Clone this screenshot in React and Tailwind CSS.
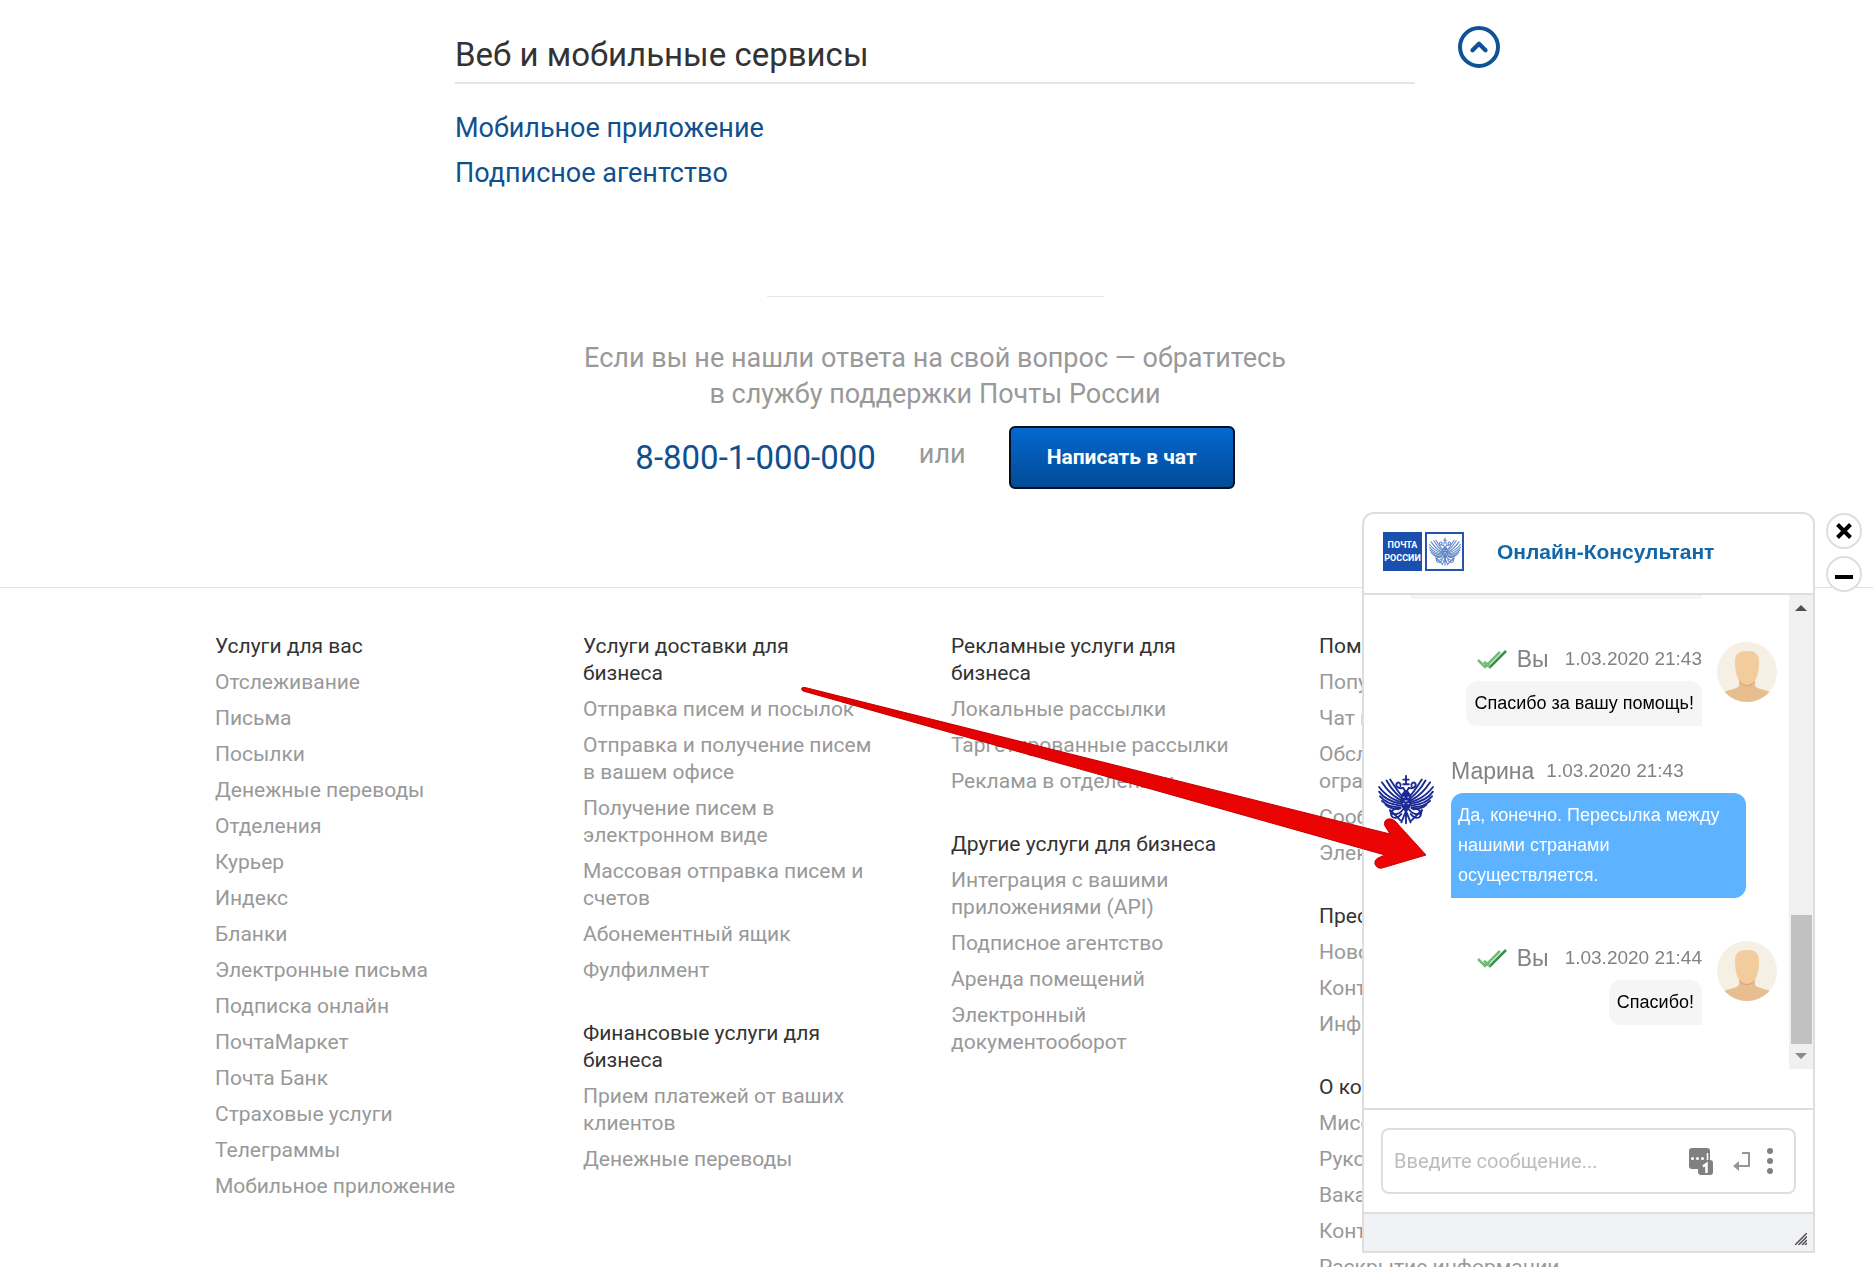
import React from 'react';
import { ChevronUp } from 'lucide-react';

const FOOTER_COLUMNS = [
  [
    {
      title: 'Услуги для вас',
      links: [
        'Отслеживание',
        'Письма',
        'Посылки',
        'Денежные переводы',
        'Отделения',
        'Курьер',
        'Индекс',
        'Бланки',
        'Электронные письма',
        'Подписка онлайн',
        'ПочтаМаркет',
        'Почта Банк',
        'Страховые услуги',
        'Телеграммы',
        'Мобильное приложение'
      ]
    }
  ],
  [
    {
      title: 'Услуги доставки для бизнеса',
      links: [
        'Отправка писем и посылок',
        'Отправка и получение писем в\u00a0вашем офисе',
        'Получение писем в электронном виде',
        'Массовая отправка писем и счетов',
        'Абонементный ящик',
        'Фулфилмент'
      ]
    },
    {
      title: 'Финансовые услуги для бизнеса',
      links: ['Прием платежей от ваших клиентов', 'Денежные переводы']
    }
  ],
  [
    {
      title: 'Рекламные услуги для бизнеса',
      links: ['Локальные рассылки', 'Таргетированные рассылки', 'Реклама в отделениях']
    },
    {
      title: 'Другие услуги для бизнеса',
      links: [
        'Интеграция с вашими приложениями (API)',
        'Подписное агентство',
        'Аренда помещений',
        'Электронный документооборот'
      ]
    }
  ],
  [
    {
      title: 'Помощь',
      links: [
        'Популярные вопросы',
        'Чат поддержки',
        'Обслуживание лиц с ограничениями',
        'Сообщить о проблеме',
        'Электронные услуги'
      ]
    },
    {
      title: 'Пресс-центр',
      links: ['Новости', 'Контакты для СМИ', 'Информация']
    },
    {
      title: 'О компании',
      links: ['Миссия', 'Руководство', 'Вакансии', 'Контакты', 'Раскрытие информации']
    }
  ]
];

// One wing, the other one is mirrored
const Wing = () => (
  <g>
    <path d="M25 26 C20 22 14 16 9 7" />
    <path d="M24 28 C16 24 10 18 4 9" />
    <path d="M24 30 C14 27 7 22 1 14" />
    <path d="M24 32 C14 30 6 26 1 19" />
    <path d="M24 34 C15 33 7 30 2 24" />
    <path d="M24 36 C16 36 9 34 4 29" />
    <path d="M24 37 C18 38 12 37 8 33" />
    <path d="M26 24 C22 20 18 14 13 6" />
    <path d="M27 15 C23 16 18 14 20 10 C22 8 25 10 24 13" />
    <path d="M27 38 C21 46 13 44 13 39" />
    <path d="M22 38 C16 36 12 42 15 46 C18 49 23 46 25 43" />
    <path d="M13 39 L24 50" />
  </g>
);

const Eagle = ({ className }) => (
  <svg viewBox="0 0 60 56" className={className} fill="none" stroke="currentColor" strokeWidth="2" strokeLinecap="round" aria-hidden="true">
    <Wing />
    <g transform="translate(60 0) scale(-1 1)">
      <Wing />
    </g>
    <path d="M30 2v9M27 6h6M27 11h6" strokeWidth="2" />
    <path d="M30 17 C24 20 23 28 25 35 L30 42 L35 35 C37 28 36 20 30 17z" fill="currentColor" stroke="none" />
    <path d="M27 15 C28 17 30 19 30 22 M33 15 C32 17 30 19 30 22" />
    <path d="M30 40 L25 52 M30 40 L35 52 M30 40v13" strokeWidth="2" />
    <path d="M27 25h1M32 25h1M29 29h2M27 32h1M32 32h1" stroke="#fff" strokeWidth="1" />
  </svg>
);

const UserAvatar = () => (
  <svg viewBox="0 0 60 60" className="size-[60px] shrink-0" aria-hidden="true">
    <clipPath id="avatar-clip">
      <circle cx="30" cy="30" r="30" />
    </clipPath>
    <g clipPath="url(#avatar-clip)">
      <rect width="60" height="60" fill="#f5efe4" />
      <path d="M5 52 C8 47 22 48 22 43 V37 H38 V43 C38 48 52 47 55 52 V60 H5z" fill="#e8bd90" />
      <path d="M22 39 C26 46 34 46 38 39 V36 H22z" fill="#dba878" />
      <path d="M18 19 C18 12 22 9 30 9 C38 9 42 12 42 19 C42 33 39 42 30 43 C21 42 18 33 18 19z" fill="#f3cc9e" />
    </g>
  </svg>
);

const DoubleCheck = () => (
  <svg viewBox="0 0 30 20" className="h-5 w-[30px]" fill="none" strokeWidth="2.500" aria-label="Прочитано">
    <path d="M1 10 L8 17 L23 2" stroke="#6fbf73" />
    <path d="M7 12 L13 17 L29 1" stroke="#35914a" />
    <path d="M7 12 L13 17" stroke="#7cc680" strokeWidth="2" />
  </svg>
);

const OwnMessage = ({ time, text }) => (
  <div className="flex items-start justify-end gap-[15px] pr-3">
    <div className="flex flex-col items-end">
      <div className="flex h-[39px] items-center gap-4 pb-1 text-[19px] text-[#828282]">
        <span className="flex items-center gap-[10px] text-[23px]">
          <DoubleCheck />
          Вы
        </span>
        <time>{time}</time>
      </div>
      <p className="rounded-[12px] rounded-br-none bg-[#f5f5f6] px-2 pt-[7px] pb-2 text-[18px] leading-[30px] text-black">{text}</p>
    </div>
    <UserAvatar />
  </div>
);

const OperatorMessage = ({ name, time, text }) => (
  <div className="flex items-start gap-[15px] pl-3">
    <Eagle className="mt-5 h-[52px] w-[60px] shrink-0 text-[#1b2a94]" />
    <div className="flex flex-col items-start">
      <div className="flex h-[39px] items-center gap-3 pb-1 text-[19px] text-[#828282]">
        <span className="text-[23px]">{name}</span>
        <time>{time}</time>
      </div>
      <p className="w-[295px] rounded-[12px] rounded-bl-none bg-[#5db3ff] px-[7px] pt-[7px] pb-2 text-[18px] leading-[30px] text-white">{text}</p>
    </div>
  </div>
);

const ChatLogo = () => (
  <div className="flex gap-[3px]">
    <div className="flex size-[39px] flex-col items-center justify-center bg-[#1a4fae] font-['Roboto'] text-[9px] leading-[13px] font-bold text-white">
      <span>ПОЧТА</span>
      <span>РОССИИ</span>
    </div>
    <div className="flex size-[39px] items-center justify-center border-2 border-[#2455a8] bg-white">
      <Eagle className="size-8 text-[#5f86c6]" />
    </div>
  </div>
);

const ScrollTrack = () => (
  <div className="flex h-[474px] w-6 shrink-0 flex-col items-center bg-[#f0f0f0]">
    <svg viewBox="0 0 12 6" className="mt-[10px] h-[6px] w-3" aria-hidden="true">
      <path d="M0 6 L6 0 L12 6z" fill="#505050" />
    </svg>
    <div className="mt-auto h-[129px] w-[21px] bg-[#c1c1c1]" />
    <svg viewBox="0 0 12 6" className="mt-[9px] mb-[10px] h-[6px] w-3" aria-hidden="true">
      <path d="M0 0 L6 6 L12 0z" fill="#8b8b8b" />
    </svg>
  </div>
);

const ChatInput = () => (
  <div className="flex h-[66px] items-center rounded-lg border-2 border-[#dedede] bg-white pr-[21px] pl-[11px] text-[#828282]">
    <input
      type="text"
      aria-label="Введите сообщение"
      placeholder="Введите сообщение..."
      className="min-w-0 flex-1 font-['Roboto'] text-xl text-[#333] outline-none placeholder:text-[#bdbdbd]"
    />
    <button type="button" aria-label="Быстрые ответы">
      <svg viewBox="0 0 24 27" className="h-[27px] w-6">
        <rect width="21" height="21" rx="3" fill="#808080" />
        <rect x="9" y="12" width="15" height="15" rx="3" fill="#808080" />
        <path d="M3.500 10.500h.01M8.500 10.500h.01M13.500 10.500h.01" stroke="#fff" strokeWidth="3" strokeLinecap="round" />
        <path d="M18.500 5v7" stroke="#fff" strokeWidth="1.500" />
        <path d="M14 18.500 L17.500 16 V25" stroke="#fff" strokeWidth="2.500" fill="none" />
      </svg>
    </button>
    <button type="button" aria-label="Отправить" className="ml-5">
      <svg viewBox="0 0 17 19" className="h-[19px] w-[17px]" fill="none" stroke="#969696" strokeWidth="2">
        <path d="M9 1 H16 V14 H3" />
        <path d="M0 14 L6 9 V19z" fill="#969696" stroke="none" />
      </svg>
    </button>
    <button type="button" aria-label="Меню" className="ml-[17px]">
      <svg viewBox="0 0 6 26" className="h-[26px] w-[6px]" fill="#808080">
        <circle cx="3" cy="3" r="3" />
        <circle cx="3" cy="13" r="3" />
        <circle cx="3" cy="23" r="3" />
      </svg>
    </button>
  </div>
);

const ChatWidget = () => (
  <aside className="fixed right-[11px] bottom-[14px] flex items-start gap-[11px] font-['Liberation_Sans',sans-serif]">
    <div className="flex h-[741px] w-[453px] flex-col overflow-hidden rounded-t-xl border-2 border-[#dedede] bg-white">
      <header className="flex h-[81px] shrink-0 items-center gap-[33px] border-b-2 border-[#dedede] pb-1 pl-[19px]">
        <ChatLogo />
        <h2 className="text-[21px] font-bold text-[#1167a8]">Онлайн-Консультант</h2>
      </header>
      <div className="flex min-h-0 flex-1">
        <div className="flex-1">
          <div className="ml-[46px] h-1 w-[292px] rounded-bl bg-[#f5f5f6]" />
          <div className="mt-[43px]">
            <OwnMessage time="1.03.2020 21:43" text="Спасибо за вашу помощь!" />
          </div>
          <div className="mt-7">
            <OperatorMessage name="Марина" time="1.03.2020 21:43" text="Да, конечно. Пересылка между нашими странами осуществляется." />
          </div>
          <div className="mt-[43px]">
            <OwnMessage time="1.03.2020 21:44" text="Спасибо!" />
          </div>
        </div>
        <ScrollTrack />
      </div>
      <div className="border-t-2 border-[#dedede] px-[17px] py-[18px]">
        <ChatInput />
      </div>
      <div className="flex h-[39px] shrink-0 items-end justify-end border-t-2 border-[#dedede] bg-[#f1f2f5] p-[6px]">
        <svg viewBox="0 0 12 12" className="size-3" stroke="#505050" strokeWidth="1.500" aria-hidden="true">
          <path d="M0 12 L12 0 M3.500 12 L12 3.500 M7 12 L12 7 M10 12 L12 10" />
        </svg>
      </div>
    </div>
    <div className="flex flex-col gap-[7px] pt-px">
      <button type="button" aria-label="Закрыть" className="flex size-9 items-center justify-center rounded-full border-2 border-[#dedede] bg-white">
        <svg viewBox="0 0 16 16" className="size-4" stroke="#000" strokeWidth="4">
          <path d="M1.500 1.500 L14.500 14.500 M14.500 1.500 L1.500 14.500" />
        </svg>
      </button>
      <button type="button" aria-label="Свернуть" className="flex size-9 items-center justify-center rounded-full border-2 border-[#dedede] bg-white pt-[6px]">
        <svg viewBox="0 0 18 4" className="h-1 w-[18px]">
          <rect width="18" height="4" />
        </svg>
      </button>
    </div>
  </aside>
);

// Hand-drawn pointer to the operator's reply
const PointerArrow = () => (
  <svg viewBox="0 0 626 186" className="pointer-events-none fixed right-[446px] bottom-[394px] h-[186px] w-[626px]" aria-hidden="true">
    <defs>
      <linearGradient id="arrow-fill" x1="0" y1="0" x2="0" y2="1">
        <stop offset="0" stopColor="#e00000" />
        <stop offset="1" stopColor="#ee0505" />
      </linearGradient>
    </defs>
    <path
      d="M2 0 L589 147 L584 139 Q582 134 587 132 Q590 131 594 134 L625 168 L581 181 Q576 182 574 177 Q573 173 577 171 L584 168 L2 4 Q-1 2 2 0z"
      fill="url(#arrow-fill)"
      stroke="#c40000"
      strokeWidth="1"
    />
  </svg>
);

const FooterGroup = ({ title, links }) => (
  <section>
    <h3 className="text-[#333]">{title}</h3>
    <ul className="mt-[9px] flex flex-col gap-[9px]">
      {links.map((link) => (
        <li key={link}>
          <a href="#">{link}</a>
        </li>
      ))}
    </ul>
  </section>
);

const App = () => {
  return (
    <div className="h-screen overflow-hidden bg-white font-['Roboto',sans-serif]">
      <main className="pr-[3px] text-[27px] text-[#999]">
        <section className="relative mx-auto max-w-[960px] pt-8">
          <h1 className="border-b-2 border-[#e6e6e6] pb-[5px] text-[33px] leading-[45px] text-[#333]">Веб и мобильные сервисы</h1>
          <button
            type="button"
            aria-label="Свернуть раздел"
            className="absolute top-[26px] left-full ml-[43px] flex size-[42px] items-center justify-center rounded-full border-4 border-[#0f5298] text-[#0f5298]"
          >
            <ChevronUp size={26} strokeWidth={4} />
          </button>
          <ul className="mt-[22px] text-[#10508f]">
            <li className="leading-[45px]">
              <a href="#">Мобильное приложение</a>
            </li>
            <li className="leading-[45px]">
              <a href="#">Подписное агентство</a>
            </li>
          </ul>
        </section>

        <hr className="mx-auto mt-[100px] w-[337px] border-[#e6e6e6]" />

        <section className="mt-[43px] text-center">
          <p className="leading-9">
            Если вы не нашли ответа на свой вопрос — обратитесь
            <br />
            в службу поддержки Почты России
          </p>
          <div className="mt-[14px] flex items-center justify-center gap-[43px]">
            <a href="#" className="text-[33px] text-[#10508f]">8-800-1-000-000</a>
            <span className="pb-[6px]">или</span>
            <button
              type="button"
              className="h-[63px] rounded-md border-2 border-[#04101f] bg-linear-to-b from-[#0468cf] to-[#024b97] px-9 text-[21px] font-bold text-white"
            >
              Написать в чат
            </button>
          </div>
        </section>
      </main>

      <footer className="mt-[98px] border-t border-[#e2e2e2] pt-[45px] text-[21px] leading-[27px] text-[#999]">
        <div className="mx-auto grid max-w-[1443px] grid-cols-4 gap-x-[29px]">
          {FOOTER_COLUMNS.map((groups) => (
            <div key={groups[0].title} className="flex flex-col gap-9 pr-[50px]">
              {groups.map((group) => (
                <FooterGroup key={group.title} {...group} />
              ))}
            </div>
          ))}
        </div>
      </footer>

      <ChatWidget />
      <PointerArrow />
    </div>
  );
};

export default App;
